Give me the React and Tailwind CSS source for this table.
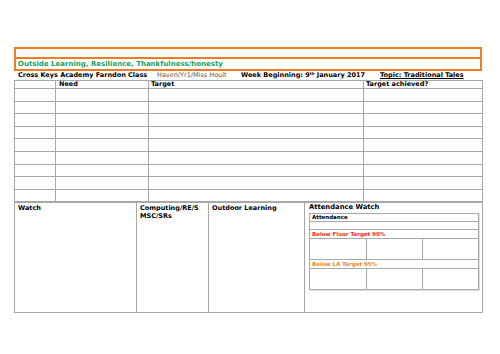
const line = "border border-[#a8a8a8]";

function MainTable() {
  const rows = Array.from({ length: 9 });
  return (
    <table className="w-[468px] table-fixed border-collapse">
      <colgroup>
        <col className="w-[41px]" />
        <col className="w-[93px]" />
        <col className="w-[215px]" />
        <col className="w-[119px]" />
      </colgroup>
      <tbody>
        <tr className="h-[8px]">
          <td className={line}></td>
          <td className={`${line} pl-[3px] align-top font-bold leading-[7px]`}>Need</td>
          <td className={`${line} pl-[2px] align-top font-bold leading-[7px]`}>Target</td>
          <td className={`${line} pl-[2px] align-top font-bold leading-[7px]`}>Target achieved?</td>
        </tr>
        {rows.map((_, i) => (
          <tr key={i} className="h-[12.6px]">
            <td className={line}></td>
            <td className={line}></td>
            <td className={line}></td>
            <td className={line}></td>
          </tr>
        ))}
      </tbody>
    </table>
  );
}

function Attendance() {
  const cell = "border border-[#a8a8a8]";
  return (
    <table className="mt-[1px] w-[169px] table-fixed border-collapse shadow-[1px_1px_0_#ddd]">
      <colgroup>
        <col className="w-[57px]" />
        <col className="w-[56px]" />
        <col className="w-[56px]" />
      </colgroup>
      <tbody>
        <tr className="h-[8px]">
          <td colSpan={3} className={`${cell} pl-[2px] align-top text-[5.5px] font-bold leading-[7px]`}>
            Attendance
          </td>
        </tr>
        <tr className="h-[8px]">
          <td colSpan={3} className={cell}></td>
        </tr>
        <tr className="h-[9px]">
          <td colSpan={3} className={`${cell} pl-[2px] align-top text-[5.5px] font-bold leading-[8px] text-[#ff2a2a]`}>
            Below Floor Target 90%
          </td>
        </tr>
        <tr className="h-[21px]">
          <td className={cell}></td>
          <td className={cell}></td>
          <td className={cell}></td>
        </tr>
        <tr className="h-[9px]">
          <td colSpan={3} className={`${cell} pl-[2px] align-top text-[5.5px] font-bold leading-[8px] text-[#ec8a30]`}>
            Below LA Target 95%
          </td>
        </tr>
        <tr className="h-[21px]">
          <td className={cell}></td>
          <td className={cell}></td>
          <td className={cell}></td>
        </tr>
      </tbody>
    </table>
  );
}

function BottomTable() {
  return (
    <table className="w-[468px] table-fixed border-collapse">
      <colgroup>
        <col className="w-[122px]" />
        <col className="w-[72px]" />
        <col className="w-[96px]" />
        <col className="w-[178px]" />
      </colgroup>
      <tbody>
        <tr className="h-[110px]">
          <td className={`${line} pl-[3px] pt-[1px] align-top font-bold leading-[8px]`}>Watch</td>
          <td className={`${line} pl-[3px] pt-[1px] align-top font-bold leading-[8px]`}>
            Computing/RE/S
            <br />
            MSC/SRs
          </td>
          <td className={`${line} pl-[3px] pt-[1px] align-top font-bold leading-[8px]`}>Outdoor Learning</td>
          <td className={`${line} pl-[4px] align-top`}>
            <div className="text-[6.8px] font-bold leading-[9px]">Attendance Watch</div>
            <Attendance />
          </td>
        </tr>
      </tbody>
    </table>
  );
}

export default function App() {
  return (
    <div
      className="h-[354px] w-[500px] bg-white pl-[14px] pt-[47px] text-[6.5px] text-black"
      style={{ fontFamily: "'DejaVu Sans', Verdana, sans-serif" }}
    >
      <div className="w-[468px]">
        <div className="flex h-[24px] flex-col border-2 border-[#f57b22]">
          <div className="h-[10px] border-b-2 border-[#f57b22]"></div>
          <div className="flex-1 pl-[2px] text-[7px] font-bold leading-[10px] text-[#22a05a]">
            Outside Learning, Resilience, Thankfulness/honesty
          </div>
        </div>
        <div className="flex h-[9px] items-center pl-[4px] leading-[9px]">
          <span className="w-[139px] font-bold">Cross Keys Academy Farndon Class</span>
          <span className="w-[84px] text-[#555]">Haven/Yr1/Miss Hoult</span>
          <span className="w-[139px] font-bold">
            Week Beginning: 9<sup className="text-[4px]">th</sup> January 2017
          </span>
          <span className="font-bold underline">Topic: Traditional Tales</span>
        </div>
        <MainTable />
        <BottomTable />
      </div>
    </div>
  );
}
